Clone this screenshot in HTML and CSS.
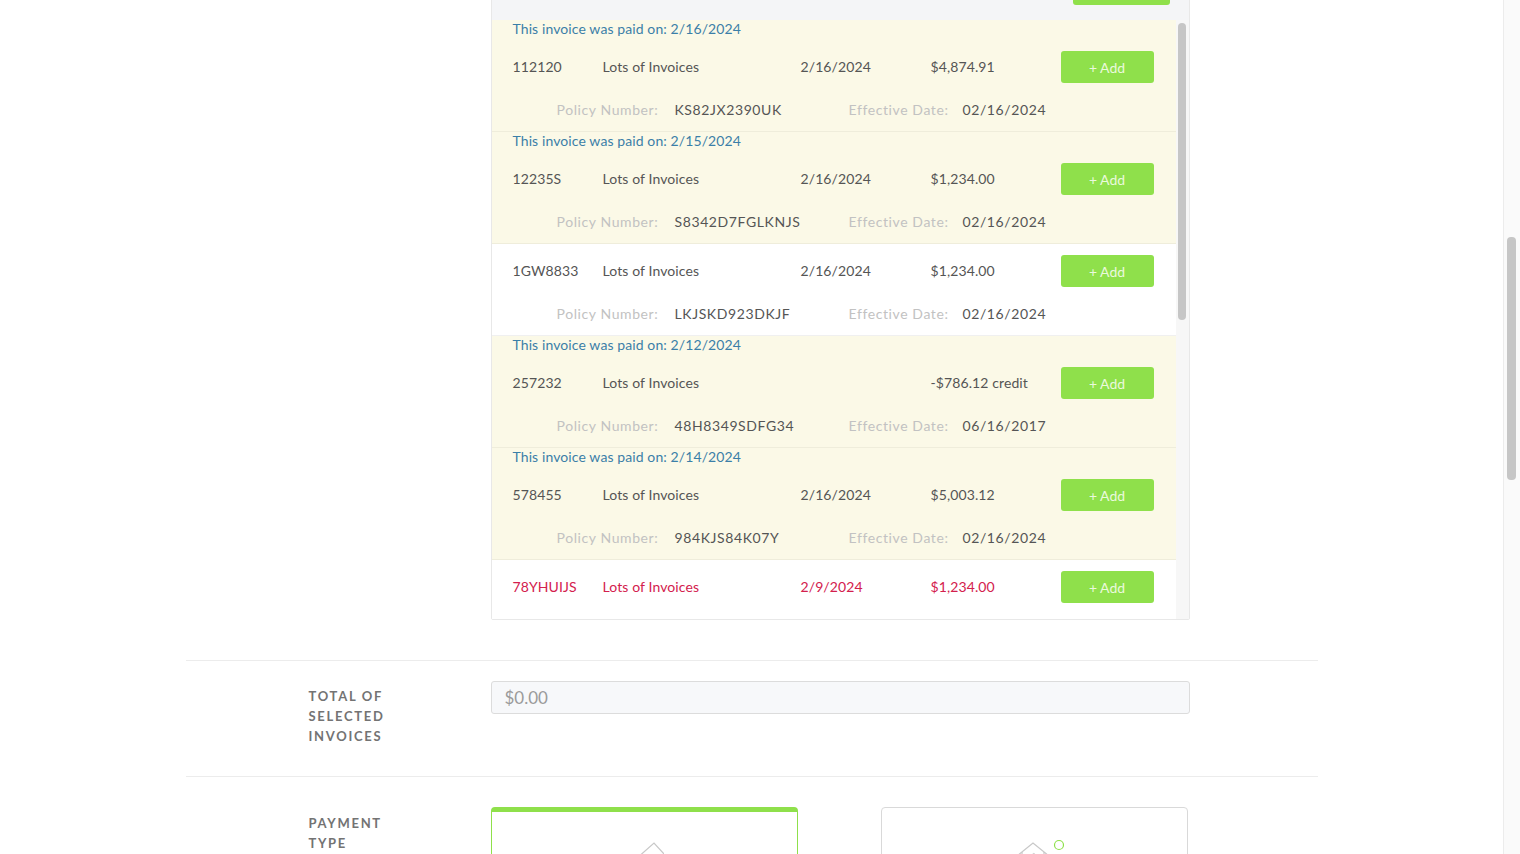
FILE: index.html
```html
<!DOCTYPE html>
<html>
<head>
<link rel="stylesheet" href="styles.css">
</head>
<body>
<div class="page">
  <div class="content">
    <div class="field-row top">
      <div class="invoice-box">
        <div class="box-head"><button class="add">+ Add</button></div>
        <div class="list-wrap">
          <div class="list">

            <div class="inv paid">
              <div class="note">This invoice was paid on: 2/16/2024</div>
              <div class="main">
                <span class="c-id">112120</span>
                <span class="c-desc">Lots of Invoices</span>
                <span class="c-date">2/16/2024</span>
                <span class="c-amt">$4,874.91</span>
                <button class="add">+ Add</button>
              </div>
              <div class="policy">
                <span class="p-lbl">Policy Number:</span>
                <span class="p-num">KS82JX2390UK</span>
                <span class="p-lbl2">Effective Date:</span>
                <span class="p-val">02/16/2024</span>
              </div>
            </div>

            <div class="inv paid">
              <div class="note">This invoice was paid on: 2/15/2024</div>
              <div class="main">
                <span class="c-id">12235S</span>
                <span class="c-desc">Lots of Invoices</span>
                <span class="c-date">2/16/2024</span>
                <span class="c-amt">$1,234.00</span>
                <button class="add">+ Add</button>
              </div>
              <div class="policy">
                <span class="p-lbl">Policy Number:</span>
                <span class="p-num">S8342D7FGLKNJS</span>
                <span class="p-lbl2">Effective Date:</span>
                <span class="p-val">02/16/2024</span>
              </div>
            </div>

            <div class="inv">
              <div class="main">
                <span class="c-id">1GW8833</span>
                <span class="c-desc">Lots of Invoices</span>
                <span class="c-date">2/16/2024</span>
                <span class="c-amt">$1,234.00</span>
                <button class="add">+ Add</button>
              </div>
              <div class="policy">
                <span class="p-lbl">Policy Number:</span>
                <span class="p-num">LKJSKD923DKJF</span>
                <span class="p-lbl2">Effective Date:</span>
                <span class="p-val">02/16/2024</span>
              </div>
            </div>

            <div class="inv paid">
              <div class="note">This invoice was paid on: 2/12/2024</div>
              <div class="main">
                <span class="c-id">257232</span>
                <span class="c-desc">Lots of Invoices</span>
                <span class="c-date"></span>
                <span class="c-amt">-$786.12 credit</span>
                <button class="add">+ Add</button>
              </div>
              <div class="policy">
                <span class="p-lbl">Policy Number:</span>
                <span class="p-num">48H8349SDFG34</span>
                <span class="p-lbl2">Effective Date:</span>
                <span class="p-val">06/16/2017</span>
              </div>
            </div>

            <div class="inv paid">
              <div class="note">This invoice was paid on: 2/14/2024</div>
              <div class="main">
                <span class="c-id">578455</span>
                <span class="c-desc">Lots of Invoices</span>
                <span class="c-date">2/16/2024</span>
                <span class="c-amt">$5,003.12</span>
                <button class="add">+ Add</button>
              </div>
              <div class="policy">
                <span class="p-lbl">Policy Number:</span>
                <span class="p-num">984KJS84K07Y</span>
                <span class="p-lbl2">Effective Date:</span>
                <span class="p-val">02/16/2024</span>
              </div>
            </div>

            <div class="inv overdue">
              <div class="main">
                <span class="c-id">78YHUIJS</span>
                <span class="c-desc">Lots of Invoices</span>
                <span class="c-date">2/9/2024</span>
                <span class="c-amt">$1,234.00</span>
                <button class="add">+ Add</button>
              </div>
            </div>

          </div>
          <div class="list-bar"><div class="list-thumb"></div></div>
        </div>
      </div>
    </div>

    <div class="field-row section">
      <div class="label">Total of selected invoices</div>
      <div class="total">$0.00</div>
    </div>

    <div class="field-row section pay">
      <div class="label">Payment type</div>
      <div class="pay-cards">
        <div class="pay-card active">
          <svg width="40" height="30" viewBox="0 0 40 30">
            <path d="M12 21 L30 5 L40 16 L22 32 Z" fill="none" stroke="#c8c8c8" stroke-width="1.2"/>
            <path d="M17 17 L32 30" fill="none" stroke="#d6d6d6" stroke-width="1"/>
          </svg>
        </div>
        <div class="pay-card">
          <svg width="60" height="30" viewBox="0 0 60 30">
            <path d="M13 18 L29 5 L45 18" fill="none" stroke="#c8c8c8" stroke-width="1.2"/>
            <path d="M18 14 L18 32 M40 14 L40 32" fill="none" stroke="#c8c8c8" stroke-width="1.2"/>
            <path d="M24 20 L30 15 L34 24" fill="none" stroke="#d2d2d2" stroke-width="1"/>
            <circle cx="55" cy="7" r="4.5" fill="none" stroke="#8ee04a" stroke-width="1.2"/>
          </svg>
        </div>
      </div>
    </div>
  </div>
</div>
<div class="scrollbar"><div class="thumb"></div></div>
</body>
</html>
```

FILE: styles.css
```css
html, body {
  margin: 0;
  height: 854px;
  overflow: hidden;
}
body {
  display: flex;
  background: #fff;
  font-family: Lato, "Noto Sans", sans-serif;
  color: #555;
}
.page {
  flex: 1;
  margin-top: -40px;
}
.content {
  width: 1132px;
  margin: 0 auto;
}
.field-row {
  display: flex;
}
.field-row.top {
  padding-left: 305px;
  padding-bottom: 40px;
}
.section {
  border-top: 1px solid #ececec;
  padding: 20px 0 30px 123px;
}
.label {
  width: 182px;
  flex: none;
  padding-top: 5px;
  box-sizing: border-box;
  padding-right: 80px;
  font-size: 13px;
  line-height: 20px;
  font-weight: 700;
  letter-spacing: 1.7px;
  text-transform: uppercase;
  color: #737373;
}
.pay .label {
  padding-top: 16px;
}

/* invoice list */
.invoice-box {
  width: 699px;
  box-sizing: border-box;
  border: 1px solid #e8e8e8;
  border-radius: 2px;
}
.box-head {
  height: 59px;
  background: #f4f5f7;
  display: flex;
  justify-content: flex-end;
  align-items: flex-start;
  padding: 12px 19px 0 0;
  box-sizing: border-box;
}
.add {
  width: 93px;
  height: 32px;
  border: 0;
  border-radius: 3px;
  background: #8fe04b;
  color: #eaf9dd;
  font-family: Lato, sans-serif;
  font-size: 14px;
  flex: none;
}
.box-head .add {
  width: 97px;
}
.list-wrap {
  display: flex;
  height: 599px;
}
.list {
  flex: 1;
  overflow: hidden;
}
.list-bar {
  width: 13px;
  background: #f7f7f7;
  padding: 3px 3px 0 2px;
  box-sizing: border-box;
}
.list-thumb {
  height: 297px;
  background: #c6c6c6;
  border-radius: 4px;
}
.inv {
  padding: 11px 21px 12px 21px;
  border-bottom: 1px solid #f0f0f0;
  background: #fff;
  font-size: 14px;
  letter-spacing: 0.1px;
}
.inv.paid {
  background: #fbf9e7;
  border-bottom-color: #efeddb;
}
.inv.overdue {
  padding-bottom: 60px;
}
.note {
  margin: -11px 0 13px;
  line-height: 18px;
  color: #3b7fa8;
}
.main {
  display: flex;
  align-items: center;
  height: 32px;
}
.main span {
  flex: none;
  margin-bottom: 1px;
}
.c-id { width: 90px; }
.c-desc { width: 198px; }
.c-date { width: 130px; }
.c-amt { width: 130px; }
.overdue .main span {
  color: #d3204d;
}
.policy {
  display: flex;
  margin-top: 18px;
  padding-left: 44px;
  line-height: 18px;
  letter-spacing: 0.6px;
}
.p-lbl { width: 118px; color: #c2c2c2; }
.p-num { width: 174px; color: #555; }
.p-lbl2 { width: 114px; color: #c2c2c2; }
.p-val { color: #555; }

/* totals */
.total {
  width: 699px;
  height: 33px;
  box-sizing: border-box;
  border: 1px solid #dcdcdc;
  border-radius: 3px;
  background: #f7f8fa;
  padding-left: 13px;
  font-size: 17px;
  line-height: 31px;
  color: #9b9b9b;
}
.pay-cards {
  display: flex;
  gap: 83px;
  padding-top: 10px;
}
.pay-card {
  width: 307px;
  height: 120px;
  box-sizing: border-box;
  border: 1px solid #d9d9d9;
  border-radius: 4px;
  display: flex;
  justify-content: center;
  padding-top: 30px;
}
.pay-card.active {
  border-color: #8fe04b;
  border-top: 5px solid #8fe04b;
  padding-top: 26px;
}

/* page scrollbar */
.scrollbar {
  width: 17px;
  flex: none;
  background: #fafafa;
  border-left: 1px solid #ececec;
  box-sizing: border-box;
  padding: 237px 4px 0 3px;
}
.thumb {
  height: 243px;
  background: #c6c6c6;
  border-radius: 4px;
}
```
